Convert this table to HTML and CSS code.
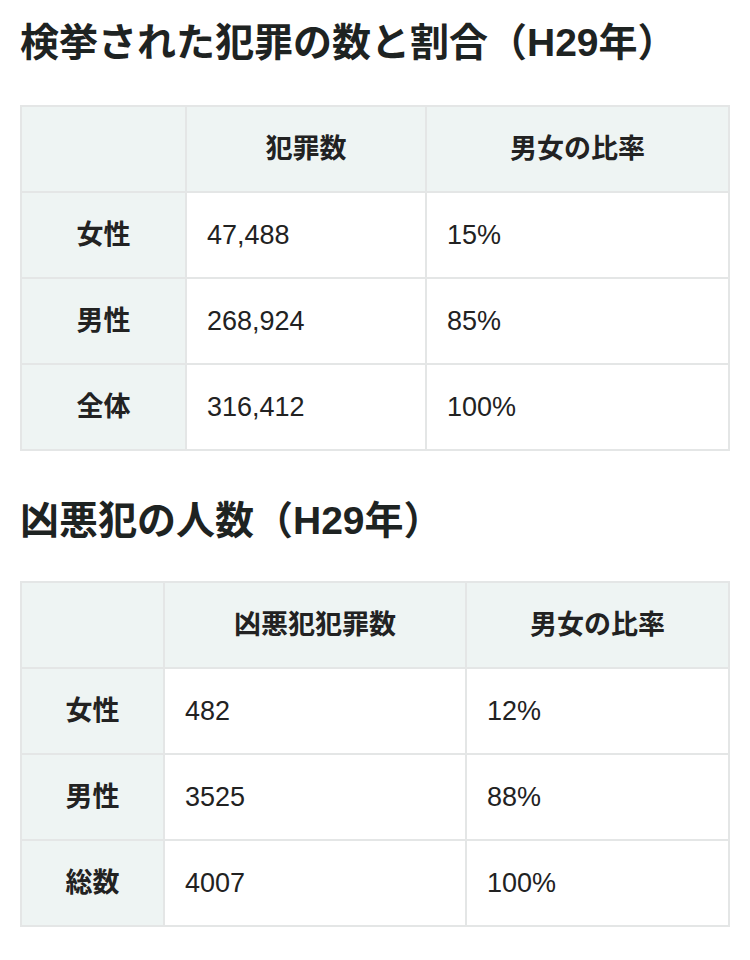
FILE: index.html
```html
<!DOCTYPE html>
<html lang="ja">
<head>
<meta charset="utf-8">
<link rel="stylesheet" href="styles.css">
</head>
<body>
<h2 class="title first">検挙された犯罪の数と割合（H29年）</h2>
<table class="data t1">
  <thead>
    <tr><th class="c1"></th><th class="c2">犯罪数</th><th class="c3">男女の比率</th></tr>
  </thead>
  <tbody>
    <tr><th>女性</th><td>47,488</td><td>15%</td></tr>
    <tr><th>男性</th><td>268,924</td><td>85%</td></tr>
    <tr><th>全体</th><td>316,412</td><td>100%</td></tr>
  </tbody>
</table>
<h2 class="title second">凶悪犯の人数（H29年）</h2>
<table class="data t2">
  <thead>
    <tr><th class="c1"></th><th class="c2">凶悪犯犯罪数</th><th class="c3">男女の比率</th></tr>
  </thead>
  <tbody>
    <tr><th>女性</th><td>482</td><td>12%</td></tr>
    <tr><th>男性</th><td>3525</td><td>88%</td></tr>
    <tr><th>総数</th><td>4007</td><td>100%</td></tr>
  </tbody>
</table>
</body>
</html>
```
FILE: styles.css
```css
html, body {
  margin: 0;
  padding: 0;
  background: #ffffff;
}
body {
  padding: 0 20px;
  font-family: "Liberation Sans", "Noto Sans CJK JP", sans-serif;
  color: #222;
}
.title {
  font-size: 39px;
  font-weight: bold;
  line-height: 56px;
  margin: 0;
  color: #1e2322;
}
.title.first {
  padding-top: 15px;
  margin-bottom: 34px;
}
.title.second {
  margin-top: 42px;
  margin-bottom: 32px;
}
.data {
  width: 710px;
  border-collapse: collapse;
  font-size: 27px;
  table-layout: fixed;
}
.data th, .data td {
  border: 2px solid #e4e6e6;
  height: 86px;
  padding: 0 20px;
  line-height: 36px;
  box-sizing: border-box;
}
.data thead th {
  background: #eef4f3;
  text-align: center;
  font-weight: bold;
}
.data tbody th {
  background: #eef4f3;
  text-align: center;
  font-weight: bold;
}
.data td {
  text-align: left;
  font-weight: normal;
  color: #222;
}
.t1 .c1 { width: 165px; }
.t1 .c2 { width: 240px; }
.t2 .c1 { width: 143px; }
.t2 .c2 { width: 302px; }
```
